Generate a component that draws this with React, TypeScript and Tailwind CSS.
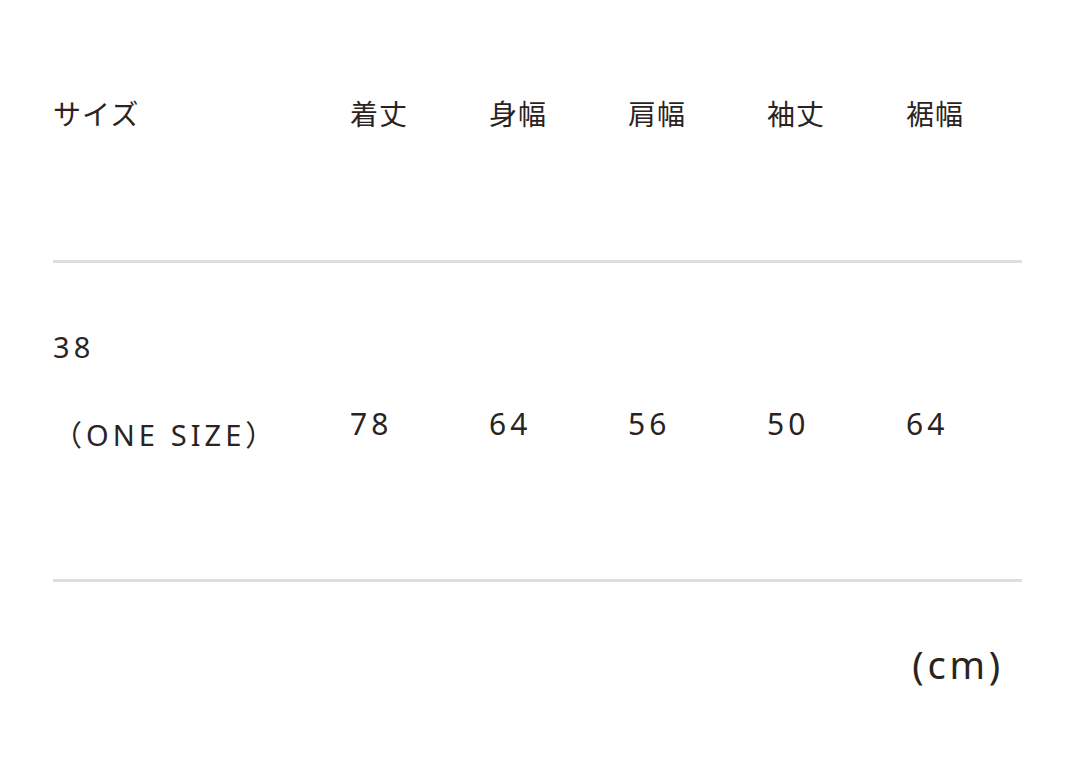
const headers = ['着丈', '身幅', '肩幅', '袖丈', '裾幅']
const values = ['78', '64', '56', '50', '64']

export default function App() {
    return (
        <div className="w-[1080px] h-[783px] bg-white text-[#2a2321] font-['Noto_Sans','Noto_Sans_CJK_JP',sans-serif]">
            <div className="pt-[96px] pl-[53px] pr-[58px]">
                {/* header row */}
                <div className="flex h-[167px] border-b-[3px] border-[#dedede]">
                    <div className="w-[297px] shrink-0 text-[28px] leading-[36px] tracking-[0.04em]">サイズ</div>
                    {headers.map(h => (
                        <div key={h} className="w-[139px] shrink-0 last:flex-1 text-[28px] leading-[36px] tracking-[0.04em]">{h}</div>
                    ))}
                </div>

                {/* value row */}
                <div className="flex items-center h-[319px] border-b-[3px] border-[#dedede]">
                    <div className="w-[297px] shrink-0 flex flex-col gap-[50px] text-[29px] leading-[38px] tracking-[0.14em] -mt-[60px]">
                        <span>38</span>
                        <span>（ONE SIZE）</span>
                    </div>
                    {values.map((v, i) => (
                        <div key={i} className="w-[139px] shrink-0 last:flex-1 pt-[5px] text-[30px] leading-[38px] tracking-[0.14em]">{v}</div>
                    ))}
                </div>

                <div className="flex justify-end pr-[18px] pt-[60px]">
                    <span className="text-[38px] leading-[44px] tracking-[0.1em]">(cm)</span>
                </div>
            </div>
        </div>
    )
}
